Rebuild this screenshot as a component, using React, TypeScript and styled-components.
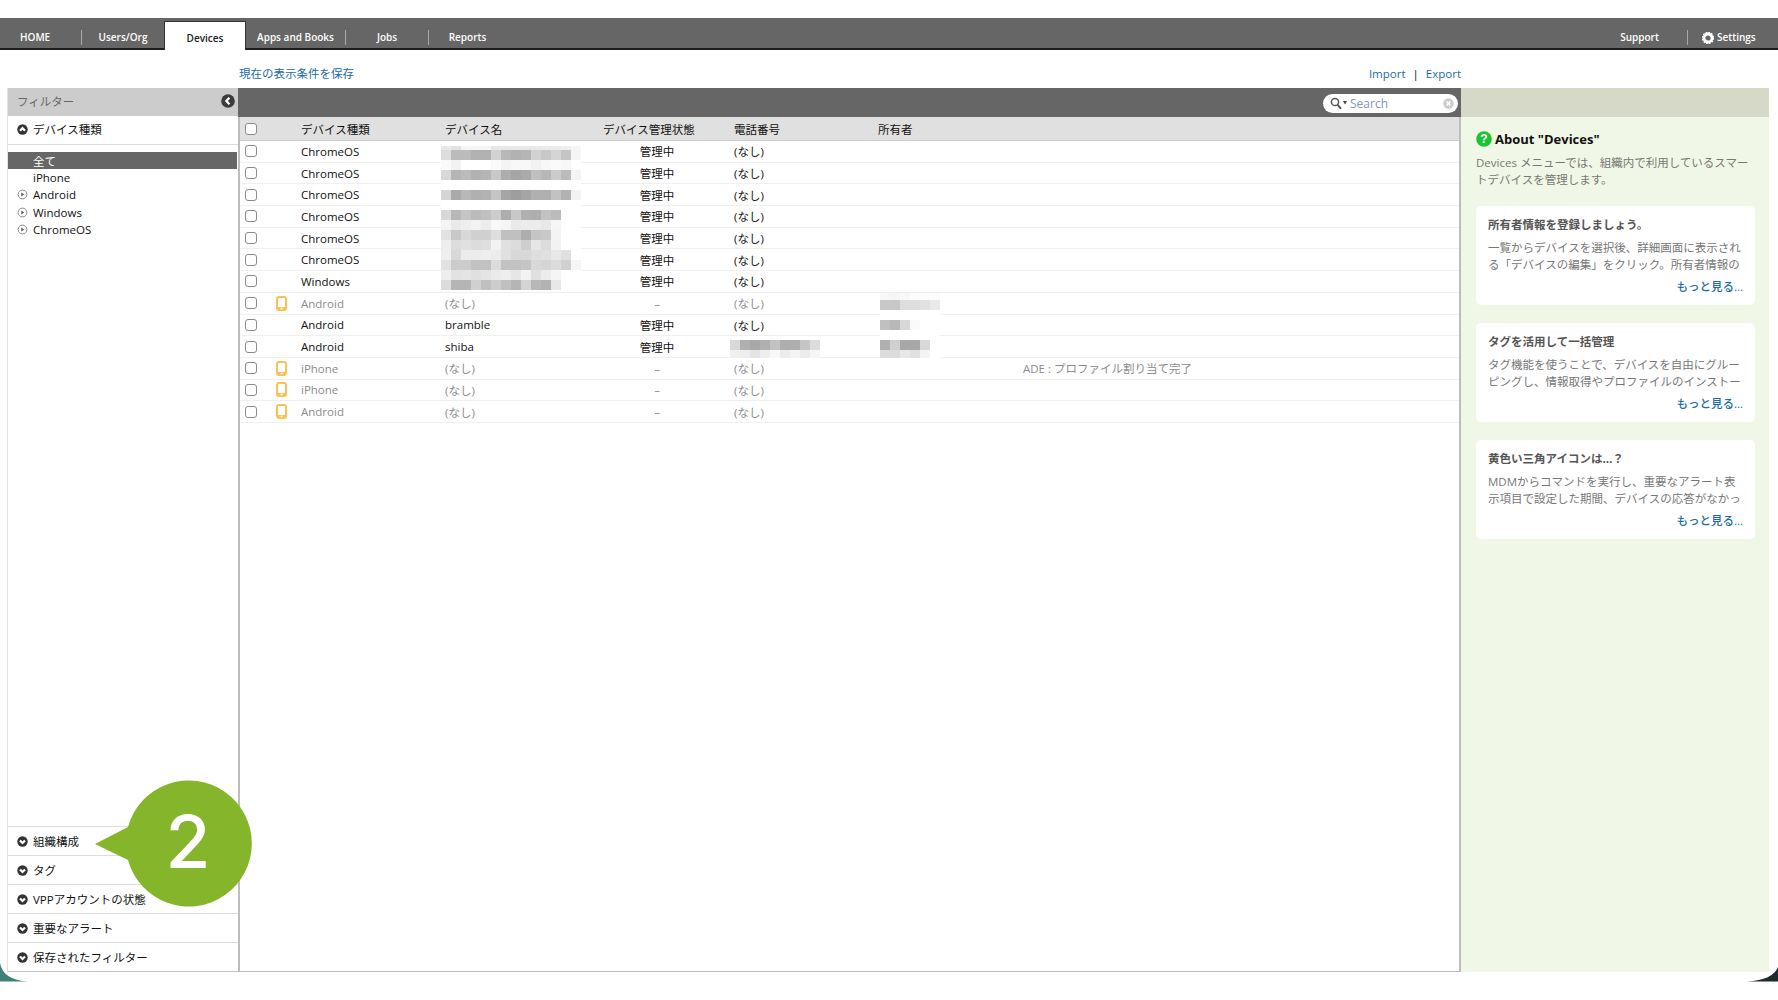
import styled, { createGlobalStyle } from "styled-components";

type Device = {
  type: string;
  name?: string;
  managed: boolean;
  phone?: boolean;
  owner?: boolean;
  note?: string;
};

const DEVICES: Device[] = [
  { type: "ChromeOS", managed: true },
  { type: "ChromeOS", managed: true },
  { type: "ChromeOS", managed: true },
  { type: "ChromeOS", managed: true },
  { type: "ChromeOS", managed: true },
  { type: "ChromeOS", managed: true },
  { type: "Windows", managed: true },
  { type: "Android", name: "(なし)", managed: false },
  { type: "Android", name: "bramble", managed: true },
  { type: "Android", name: "shiba", managed: true, owner: true },
  { type: "iPhone", name: "(なし)", managed: false, note: "ADE : プロファイル割り当て完了" },
  { type: "iPhone", name: "(なし)", managed: false },
  { type: "Android", name: "(なし)", managed: false },
];

const CARDS = [
  {
    title: "所有者情報を登録しましょう。",
    lines: ["一覧からデバイスを選択後、詳細画面に表示され", "る「デバイスの編集」をクリック。所有者情報の"],
  },
  {
    title: "タグを活用して一括管理",
    lines: ["タグ機能を使うことで、デバイスを自由にグルー", "ピングし、情報取得やプロファイルのインストー"],
  },
  {
    title: "黄色い三角アイコンは…？",
    lines: ["MDMからコマンドを実行し、重要なアラート表", "示項目で設定した期間、デバイスの応答がなかっ"],
  },
];

// grey levels of the pixelated parts, one row per line
const NAME_MOSAIC = [
  "e8 e2 f5 f5 f5 e8 e8 e8 e8 e8 eb eb ee f5",
  "dd bb bb b2 b2 d2 b8 b2 b5 d2 c8 d5 c5 f5",
  "fa f2 ff ff ff fa f4 f8 f8 f2 f8 fa f8 ff",
  "d8 b5 bb b2 b5 c8 ad a5 aa c0 b8 cc bb f4",
  "ff ff ff ff ff ff ff ff ff ff ff ff ff ff",
  "d5 aa b8 b0 b2 c5 a5 9e a5 b0 b0 c2 b2 f2",
  "ff ff ff ff ff ff ff ff ff ff ff ff ff ff",
  "d8 b8 c5 bb c0 cc ad c8 b0 ae c2 bb ff ff",
  "f4 ea ee f2 ec f8 f5 ea ec ec e8 f5 ff ff",
  "e2 c8 d8 d0 d0 de c0 c0 ae c5 c8 f4 ff ff",
  "ee dc e0 dc de f2 e0 dc ce e6 dc f2 ff ff",
  "ee d8 ec ec ee ec e0 d8 d8 de e0 e8 e0 ff",
  "e2 cc cc c2 c2 dc c2 c2 c5 d8 d5 dc d0 f5",
  "ee e2 e4 e0 e4 ea ee e6 f2 e0 ec f5 ff ff",
  "dc b5 b5 d0 c0 cc c0 b5 d5 b8 b2 e8 ff ff",
];

const PHONE_MOSAIC = [
  "d8 b0 a8 b0 c2 ae ae c5 dc",
  "f0 ee e4 ee f8 ec f4 ec f6",
];

const OWNER_MOSAIC = [
  "f8 f6 f8 fc fc fc",
  "c8 c8 de de e2 ea",
  "ff ff ff ff ff ff",
  "c0 b8 d8 fa ff ff",
  "ff ff ff ff ff ff",
  "b0 d0 a8 a8 d8 ff",
  "dc dc e8 e0 f4 ff",
];

const GlobalStyle = createGlobalStyle`
  html, body {
    margin: 0;
    padding: 0;
    background: #fff;
  }
  body {
    font-family: "Open Sans", "Noto Sans CJK JP", sans-serif;
    font-size: 11.5px;
    color: #111;
  }
`;

const Page = styled("div")`
  position: relative;
  width: 1778px;
  height: 1000px;
  padding-top: 18px;
  box-sizing: border-box;
  overflow: hidden;
`;

const NavBar = styled("nav")`
  display: flex;
  align-items: flex-end;
  height: 32px;
  box-sizing: border-box;
  background: #666;
  border-bottom: 2px solid #1c1c1c;
`;

const NavItem = styled("a")<{ $width: number; $divider?: boolean }>`
  position: relative;
  display: flex;
  align-items: center;
  justify-content: center;
  width: ${(p) => p.$width}px;
  height: 15px;
  margin-bottom: 3px;
  font-size: 10px;
  font-weight: 600;
  color: #fff;
  border-right: ${(p) => (p.$divider ? "1px solid #a8a8a8" : "none")};
  box-sizing: border-box;
`;

const HomeItem = styled(NavItem)`
  justify-content: flex-start;
  padding-left: 20px;
`;

const SettingsItem = styled(NavItem)`
  justify-content: flex-start;
  gap: 3px;
  padding-left: 14px;
`;

const NavLabel = styled("span")`
  position: relative;
  top: -1px;
`;

const ActiveTab = styled("a")`
  display: flex;
  align-items: center;
  justify-content: center;
  width: 82px;
  height: 29px;
  margin-bottom: -2px;
  padding-top: 3px;
  box-sizing: border-box;
  background: #fff;
  border: 1px solid #333;
  border-bottom: none;
  font-size: 10px;
  font-weight: 600;
  color: #222;
`;

const NavSpacer = styled("div")`
  flex: 1;
`;

const LinkBar = styled("div")`
  display: flex;
  align-items: center;
  justify-content: space-between;
  height: 38px;
  padding: 12px 317px 4px 239px;
  box-sizing: border-box;
`;

const TextLink = styled("a")`
  font-size: 11.5px;
  color: #1a6ba8;
`;

const LinkGroup = styled("div")`
  display: flex;
  align-items: center;
  gap: 7px;
  color: #111;
`;

const Body = styled("div")`
  display: flex;
  height: 884px;
  padding: 0 9px 0 7px;
`;

const Sidebar = styled("aside")`
  display: flex;
  flex-direction: column;
  width: 231px;
  box-sizing: border-box;
  border-left: 1px solid #e2e2e2;
  border-bottom: 1px solid #c4c4c4;
`;

const SidebarHead = styled("div")`
  display: flex;
  align-items: center;
  justify-content: space-between;
  height: 28px;
  flex: none;
  padding: 0 3px 2px 9px;
  box-sizing: border-box;
  background: #ccc;
  color: #666;
`;

const FilterRow = styled("div")<{ $border?: boolean }>`
  display: flex;
  align-items: center;
  gap: 5px;
  height: 29px;
  flex: none;
  padding-left: 9px;
  padding-bottom: ${(p) => (p.$border ? "2px" : "0")};
  box-sizing: border-box;
  border-bottom: ${(p) => (p.$border ? "1px solid #ddd" : "none")};
  border-top: ${(p) => (p.$border ? "none" : "1px solid #ddd")};
  font-size: 11.5px;
`;

const TypeList = styled("ul")`
  flex: 1;
  margin: 7px 0 0;
  padding: 0;
  list-style: none;
`;

const TypeItem = styled("li")<{ $active?: boolean }>`
  display: flex;
  align-items: center;
  gap: 5px;
  height: 17.2px;
  padding-left: 9px;
  background: ${(p) => (p.$active ? "#666" : "transparent")};
  color: ${(p) => (p.$active ? "#fff" : "#111")};
  margin-right: 1px;
`;

const IconGap = styled("span")`
  width: 11px;
`;

const Main = styled("main")`
  position: relative;
  flex: 1;
  display: flex;
  flex-direction: column;
  box-sizing: border-box;
  border-left: 2px solid #bdbdbd;
  border-right: 2px solid #bdbdbd;
  border-bottom: 1px solid #bdbdbd;
`;

const MainBar = styled("div")`
  display: flex;
  align-items: center;
  justify-content: flex-end;
  height: 29px;
  flex: none;
  margin: 0 -2px;
  padding: 1px 3px 0 0;
  box-sizing: border-box;
  background: #666;
`;

const SearchBox = styled("div")`
  display: flex;
  align-items: center;
  width: 135px;
  height: 19px;
  padding: 0 4px 0 7px;
  box-sizing: border-box;
  background: #fff;
  border-radius: 10px;
  font-size: 12px;
  color: #8496b0;
`;

const SearchLabel = styled("span")`
  flex: 1;
  margin-left: 2px;
`;

const Columns = styled("div")`
  display: grid;
  grid-template-columns: 36px 25px 144px 150px 124px 159px 145px 1fr;
  align-items: center;
`;

const HeadRow = styled(Columns)`
  height: 24px;
  flex: none;
  box-sizing: border-box;
  background: #e0e0e0;
  border-bottom: 1px solid #ccc;
`;

const DeviceRow = styled(Columns)<{ $muted?: boolean }>`
  height: 21.7px;
  box-sizing: border-box;
  border-bottom: 1px solid #f0f0f0;
  color: ${(p) => (p.$muted ? "#8c8c8c" : "#111")};
`;

const Check = styled("input")`
  appearance: none;
  width: 12px;
  height: 12px;
  margin: 0 0 0 5px;
  box-sizing: border-box;
  background: #fff;
  border: 1.5px solid #8c8c8c;
  border-radius: 3px;
`;

const Cell = styled("span")<{ $center?: boolean; $inset?: boolean }>`
  text-align: ${(p) => (p.$center ? "center" : "left")};
  padding-left: ${(p) => (p.$inset ? "15px" : "0")};
  white-space: nowrap;
`;

const StateHead = styled("span")`
  margin-left: 8px;
  white-space: nowrap;
`;

const Mosaic = styled("svg")<{ $left: number; $top: number }>`
  position: absolute;
  left: ${(p) => p.$left}px;
  top: ${(p) => p.$top}px;
  background: #fff;
`;

const Help = styled("aside")`
  width: 308px;
  flex: none;
  background: #f1f7e6;
`;

const HelpBar = styled("div")`
  height: 29px;
  background: #d6d9c8;
`;

const HelpBody = styled("div")`
  display: flex;
  flex-direction: column;
  padding: 12px 14px 0 15px;
`;

const HelpTitle = styled("h2")`
  display: flex;
  align-items: center;
  gap: 3px;
  height: 20px;
  margin: 0;
  font-size: 13px;
  font-weight: 700;
  color: #111;
`;

const HelpText = styled("p")`
  margin: 5px 0 18px;
  font-size: 11.5px;
  line-height: 17px;
  color: #777;
  white-space: nowrap;
`;

const Card = styled("section")`
  display: flex;
  flex-direction: column;
  height: 99px;
  margin-bottom: 18px;
  padding: 10px 12px 0;
  box-sizing: border-box;
  background: #fff;
  border-radius: 5px;
`;

const CardTitle = styled("h3")`
  margin: 0 0 6px;
  font-size: 11.5px;
  line-height: 17px;
  font-weight: 700;
  color: #555;
`;

const CardText = styled("p")`
  margin: 0;
  font-size: 11.5px;
  line-height: 17px;
  color: #777;
  white-space: nowrap;
`;

const MoreLink = styled(TextLink)`
  align-self: flex-end;
  margin-top: 5px;
  line-height: 17px;
  font-weight: 500;
`;

const Callout = styled("svg")`
  position: absolute;
  left: 90px;
  top: 776px;
`;

const Corner = styled("svg")<{ $right?: boolean }>`
  position: absolute;
  top: 962px;
  ${(p) => (p.$right ? "right: 0;" : "left: 0;")}
`;

function ToggleIcon({ up }: { up?: boolean }) {
  return (
    <svg width="11" height="11" viewBox="0 0 11 11">
      <circle cx="5.5" cy="5.5" r="5.2" fill="#333" />
      <path
        d={up ? "M3 6.8 5.5 4.2 8 6.8" : "M3 4.4 5.5 7 8 4.4"}
        fill="none"
        stroke="#fff"
        strokeWidth="2.2"
      />
    </svg>
  );
}

function ExpandIcon() {
  return (
    <svg width="11" height="11" viewBox="0 0 11 11">
      <circle cx="5.5" cy="5.5" r="4.4" fill="#fff" stroke="#8a8a8a" />
      <path d="M4.2 3.6v3.8l3.2-1.9z" fill="#666" />
    </svg>
  );
}

function CollapseIcon() {
  return (
    <svg width="14" height="14" viewBox="0 0 14 14">
      <circle cx="7" cy="7" r="6.8" fill="#3c3c3c" />
      <path d="M8.4 3.8 5.3 7l3.1 3.2" fill="none" stroke="#fff" strokeWidth="2.2" />
    </svg>
  );
}

function GearIcon() {
  return (
    <svg width="12" height="12" viewBox="0 0 12 12">
      <circle cx="6" cy="6" r="4" fill="none" stroke="#fff" strokeWidth="2.8" />
      <circle cx="6" cy="6" r="5.6" fill="none" stroke="#fff" strokeWidth="1.2" strokeDasharray="1.8 1.1" />
    </svg>
  );
}

function PhoneIcon() {
  return (
    <svg width="11" height="15" viewBox="0 0 11 15">
      <rect x="1" y="1" width="9" height="13" rx="2" fill="#fff" stroke="#fac158" strokeWidth="2" />
      <rect x="1" y="11" width="9" height="3" fill="#fac158" />
      <circle cx="5.5" cy="12.4" r="1" fill="#fff" />
    </svg>
  );
}

function SearchGlass() {
  return (
    <svg width="18" height="13" viewBox="0 0 18 13">
      <circle cx="5" cy="5" r="3.6" fill="none" stroke="#555" strokeWidth="1.5" />
      <path d="M7.6 7.8 11 11.6" stroke="#555" strokeWidth="2" />
      <path d="M13 4h4l-2 3.4z" fill="#444" />
    </svg>
  );
}

function ClearIcon() {
  return (
    <svg width="11" height="11" viewBox="0 0 11 11">
      <circle cx="5.5" cy="5.5" r="5.2" fill="#ccc" />
      <path d="M3.6 3.6l3.8 3.8M7.4 3.6 3.6 7.4" stroke="#fff" strokeWidth="1.4" />
    </svg>
  );
}

function QuestionIcon() {
  return (
    <svg width="16" height="16" viewBox="0 0 16 16">
      <circle cx="8" cy="8" r="7.8" fill="#1cc431" />
      <text x="8" y="12.2" textAnchor="middle" fontSize="12" fontWeight="700" fill="#fff" fontFamily="Liberation Sans, sans-serif">
        ?
      </text>
    </svg>
  );
}

function MosaicBlock({
  rows,
  left,
  top,
  firstHeight = 10,
  lastHeight = 10,
}: {
  rows: string[];
  left: number;
  top: number;
  firstHeight?: number;
  lastHeight?: number;
}) {
  const width = rows[0].split(" ").length * 10;
  let y = 0;
  const rects = rows.flatMap((row, r) => {
    const h = r === 0 ? firstHeight : r === rows.length - 1 ? lastHeight : 10;
    const top2 = y;
    y += h;
    return row
      .split(" ")
      .map((v, c) => <rect key={`${r}-${c}`} x={c * 10} y={top2} width="10" height={h} fill={`#${v}${v}${v}`} />);
  });
  return (
    <Mosaic $left={left} $top={top} width={width} height={y} viewBox={`0 0 ${width} ${y}`}>
      {rects}
    </Mosaic>
  );
}

function App() {
  return (
    <Page>
      <GlobalStyle />
      <NavBar>
        <HomeItem $width={82} $divider><NavLabel>HOME</NavLabel></HomeItem>
        <NavItem $width={82}><NavLabel>Users/Org</NavLabel></NavItem>
        <ActiveTab>Devices</ActiveTab>
        <NavItem $width={100} $divider><NavLabel>Apps and Books</NavLabel></NavItem>
        <NavItem $width={83} $divider><NavLabel>Jobs</NavLabel></NavItem>
        <NavItem $width={77}><NavLabel>Reports</NavLabel></NavItem>
        <NavSpacer />
        <NavItem $width={96} $divider><NavLabel>Support</NavLabel></NavItem>
        <SettingsItem $width={90}>
          <GearIcon />
          <NavLabel>Settings</NavLabel>
        </SettingsItem>
      </NavBar>

      <LinkBar>
        <TextLink>現在の表示条件を保存</TextLink>
        <LinkGroup>
          <TextLink>Import</TextLink>|<TextLink>Export</TextLink>
        </LinkGroup>
      </LinkBar>

      <Body>
        <Sidebar>
          <SidebarHead>
            フィルター
            <CollapseIcon />
          </SidebarHead>
          <FilterRow $border>
            <ToggleIcon up />
            デバイス種類
          </FilterRow>
          <TypeList>
            <TypeItem $active>
              <IconGap />
              全て
            </TypeItem>
            <TypeItem>
              <IconGap />
              iPhone
            </TypeItem>
            {["Android", "Windows", "ChromeOS"].map((name) => (
              <TypeItem key={name}>
                <ExpandIcon />
                {name}
              </TypeItem>
            ))}
          </TypeList>
          {["組織構成", "タグ", "VPPアカウントの状態", "重要なアラート", "保存されたフィルター"].map((name) => (
            <FilterRow key={name}>
              <ToggleIcon />
              {name}
            </FilterRow>
          ))}
        </Sidebar>

        <Main>
          <MainBar>
            <SearchBox>
              <SearchGlass />
              <SearchLabel>Search</SearchLabel>
              <ClearIcon />
            </SearchBox>
          </MainBar>
          <HeadRow>
            <Check type="checkbox" />
            <span />
            <Cell>デバイス種類</Cell>
            <Cell>デバイス名</Cell>
            <StateHead>デバイス管理状態</StateHead>
            <Cell $inset>電話番号</Cell>
            <Cell>所有者</Cell>
            <span />
          </HeadRow>
          {DEVICES.map((d, i) => (
            <DeviceRow key={i} $muted={!d.managed}>
              <Check type="checkbox" />
              {d.managed ? <span /> : <PhoneIcon />}
              <Cell>{d.type}</Cell>
              <Cell>{d.name}</Cell>
              <Cell $center>{d.managed ? "管理中" : "–"}</Cell>
              <Cell $inset>{d.owner ? "" : "(なし)"}</Cell>
              <span />
              <Cell>{d.note}</Cell>
            </DeviceRow>
          ))}
          <MosaicBlock rows={NAME_MOSAIC} left={201} top={58} firstHeight={4} />
          <MosaicBlock rows={PHONE_MOSAIC} left={490} top={252} lastHeight={8} />
          <MosaicBlock rows={OWNER_MOSAIC} left={640} top={205} firstHeight={7} lastHeight={8} />
        </Main>

        <Help>
          <HelpBar />
          <HelpBody>
            <HelpTitle>
              <QuestionIcon />
              About "Devices"
            </HelpTitle>
            <HelpText>
              Devices メニューでは、組織内で利用しているスマー
              <br />
              トデバイスを管理します。
            </HelpText>
            {CARDS.map((card) => (
              <Card key={card.title}>
                <CardTitle>{card.title}</CardTitle>
                <CardText>
                  {card.lines[0]}
                  <br />
                  {card.lines[1]}
                </CardText>
                <MoreLink>もっと見る...</MoreLink>
              </Card>
            ))}
          </HelpBody>
        </Help>
      </Body>

      <Callout width="166" height="134" viewBox="0 0 166 134">
        <path d="M5 68 38 51A63 63 0 1 1 38 84Z" fill="#85b52a" />
        <text x="98" y="92" textAnchor="middle" fontSize="73" fontWeight="500" fill="#fff" fontFamily="Inter, sans-serif">
          2
        </text>
      </Callout>

      <Corner width="28" height="20" viewBox="0 0 28 20">
        <path d="M0 1Q3 18 28 19.5H0Z" fill="#3f8078" />
      </Corner>
      <Corner $right width="31" height="20" viewBox="0 0 31 20">
        <path d="M31 5Q26 18 0 19.5H31Z" fill="#1d2a2e" />
      </Corner>
    </Page>
  );
}

export default App;
